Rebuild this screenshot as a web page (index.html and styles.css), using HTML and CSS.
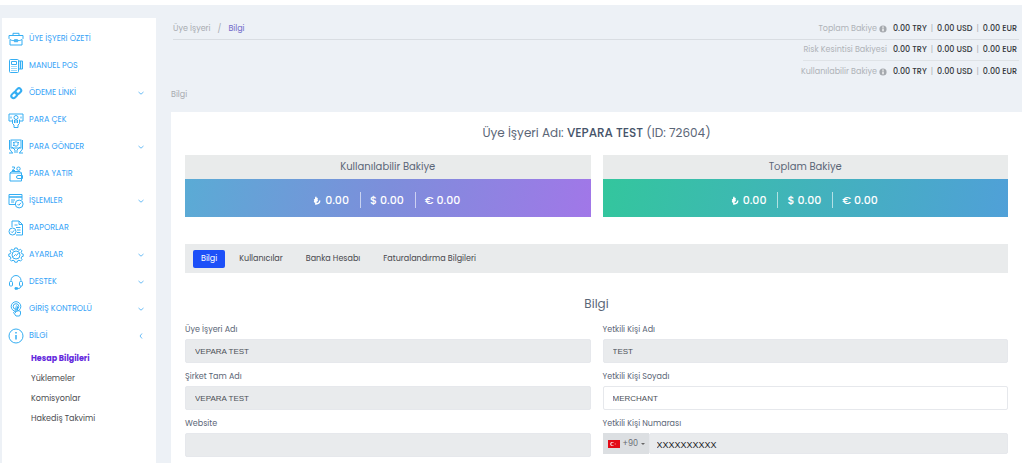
FILE: index.html
```html
<!DOCTYPE html>
<html lang="tr">
<head>
<meta charset="utf-8">
<meta name="viewport" content="width=device-width, initial-scale=1">
<title>Bilgi</title>
<link rel="stylesheet" href="styles.css">
</head>
<body>
<svg class="defs" aria-hidden="true">
  <symbol id="chev" viewBox="0 0 6 6"><path d="M.5 2L3 4.200 5.500 2"/></symbol>
  <symbol id="chev-left" viewBox="0 0 6 6"><path d="M4 .5L2 3l2 2.500"/></symbol>
  <symbol id="info" viewBox="0 0 8 8"><circle cx="4" cy="4" r="3.600" fill="#a5a9ae" stroke="none"/><path d="M4 3.600v2.600M4 1.600v1.100" stroke="#fff" stroke-width="1.300"/></symbol>
  <symbol id="lira" viewBox="0 0 10 12"><path d="M3.500 1v9.500c3 0 5.200-1.600 5.200-4.500M1 5.600l5-2.300M1 8l5-2.300"/></symbol>
</svg>
<div class="page">
  <nav class="sidebar">
    <ul class="menu">
      <li><a class="item" href="#"><svg class="icon" viewBox="0 0 16 16"><path d="M5 4.500V2.300h6v2.200M1 4.500h14v3c-1 1.500-3 2.200-5.500 2.200h-3C4 9.700 2 9 1 7.500zM2 9v5h12V9"/><rect x="6.700" y="8.700" width="2.600" height="2"/></svg>ÜYE İŞYERİ ÖZETİ</a></li>
      <li><a class="item" href="#"><svg class="icon" viewBox="0 0 16 16"><rect x="1.500" y="1.500" width="9" height="13" rx="1"/><path d="M3.500 3.500h5v3h-5zM3.500 8.500h1M5.500 8.500h1M7.500 8.500h1M3.500 10.500h1M5.500 10.500h1M7.500 10.500h1M3.500 12.500h1M5.500 12.500h1M7.500 12.500h1M10.500 3h4v8h-4"/><path stroke-width="1.500" d="M12.500 3v8"/></svg>MANUEL POS</a></li>
      <li><a class="item" href="#"><svg class="icon bold" viewBox="0 0 16 16"><rect x="7" y="4" width="6.500" height="4.400" rx="2.200" transform="rotate(-45 10.250 6.200)"/><rect x="3" y="8" width="6.500" height="4.400" rx="2.200" transform="rotate(-45 6.250 10.200)"/></svg><span>ÖDEME LİNKİ</span><svg class="chev"><use href="#chev"/></svg></a></li>
      <li><a class="item" href="#"><svg class="icon" viewBox="0 0 16 16"><path d="M4.500 9H1V2h14v7h-3.500"/><circle cx="8" cy="5.500" r="2"/><path d="M3 4.500v2M13 4.500v2M4.500 7.500v4l1.500 1.500v2.500h4V13l1.500-1.500v-4M6.500 8v3M8 8v3M9.500 8v3"/></svg>PARA ÇEK</a></li>
      <li><a class="item" href="#"><svg class="icon" viewBox="0 0 16 16"><rect x="3" y="1" width="10" height="8"/><circle cx="8" cy="5" r="2.200"/><path d="M1.500 1v9l3 4M14.500 1v9l-3 4M4 8l3 3v3M12 8l-3 3v3M1 14h4M11 14h4M5 3l1 1M11 3l-1 1M5 7l1-1"/></svg><span>PARA GÖNDER</span><svg class="chev"><use href="#chev"/></svg></a></li>
      <li><a class="item" href="#"><svg class="icon" viewBox="0 0 16 16"><path d="M2 7h11.500v8H2zM2 7l2-1.500h8L13.500 7M14.500 9.500H10a1.500 1.500 0 0 0 0 3h4.500zM4 1h2.500v1.500L4 4.500h3"/><circle cx="10.500" cy="2.700" r="1.700"/></svg>PARA YATIR</a></li>
      <li><a class="item" href="#"><svg class="icon" viewBox="0 0 16 16"><path d="M7.500 11.500H1v-10h13V7"/><path stroke-width="1.500" d="M1 4h13"/><path d="M3 7h4M3 9h3"/><circle cx="11.200" cy="11" r="3.900"/><path d="M9.500 11l1.300 1.300 2.300-2.600"/></svg><span>İŞLEMLER</span><svg class="chev"><use href="#chev"/></svg></a></li>
      <li><a class="item" href="#"><svg class="icon" viewBox="0 0 16 16"><path d="M4 7V1h7l3.500 3.500V15H8M11 1v3.500h3.500M6.500 5h3M8 7.500h4.500M9 10h3.500M9 12.500h3.500"/><circle cx="4.500" cy="11.500" r="3.500"/><path d="M3 11.500l1.200 1.200 2-2.400"/></svg>RAPORLAR</a></li>
      <li><a class="item" href="#"><svg class="icon" viewBox="0 0 16 16"><path d="M6.800 1h2.400l.4 1.600 1.400.6 1.500-.9 1.500 1.500-.9 1.500.6 1.400 1.500.4v2.200l-1.500.4-.6 1.400.9 1.500-1.500 1.500-1.500-.9-1.400.6-.4 1.400H6.800l-.4-1.400-1.400-.6-1.500.9L2 12.600l.9-1.500-.6-1.400-1.500-.4V7.100l1.500-.4.6-1.400L2 3.800l1.500-1.500 1.500.9 1.400-.6z"/><circle cx="8" cy="8" r="4"/><path d="M5.500 9.500l2-2 1 1 2-2.500"/></svg><span>AYARLAR</span><svg class="chev"><use href="#chev"/></svg></a></li>
      <li><a class="item" href="#"><svg class="icon" viewBox="0 0 16 16"><path d="M3 7.500V6.500a5 5 0 0 1 10 0v1M13 12c0 2-1.500 2.500-3.500 2.500"/><rect x="1.500" y="7.500" width="3" height="4.500" rx="1"/><rect x="11.500" y="7.500" width="3" height="4.500" rx="1"/><path class="fill" d="M7 13.700h2.500v1.500H7z"/></svg><span>DESTEK</span><svg class="chev"><use href="#chev"/></svg></a></li>
      <li><a class="item" href="#"><svg class="icon" viewBox="0 0 16 16"><circle cx="8" cy="5.500" r="4.800"/><circle cx="8" cy="5.500" r="2.800"/><path d="M8 11V5.500M8 5a1 1 0 0 1 1.500 1v3.500l3 .8v2.700L11.500 15H8l-2.500-3.500 1-.8L8 12"/></svg><span>GİRİŞ KONTROLÜ</span><svg class="chev"><use href="#chev"/></svg></a></li>
      <li><a class="item" href="#"><svg class="icon" viewBox="0 0 16 16"><circle cx="8" cy="8" r="7"/><path stroke-width="1.500" d="M8 7v4.500M8 4v1.500"/></svg><span>BİLGİ</span><svg class="chev"><use href="#chev-left"/></svg></a>
        <ul class="submenu">
          <li><a class="current" href="#">Hesap Bilgileri</a></li>
          <li><a href="#">Yüklemeler</a></li>
          <li><a href="#">Komisyonlar</a></li>
          <li><a href="#">Hakediş Takvimi</a></li>
        </ul>
      </li>
    </ul>
  </nav>
  <main class="main">
    <header class="top">
      <div class="bar">
        <div class="crumbs"><a href="#">Üye İşyeri</a><span>/</span><a class="active" href="#">Bilgi</a></div>
        <div class="balance"><span>Toplam Bakiye</span><svg class="info"><use href="#info"/></svg><div class="amounts"><b>0.00 TRY</b><i>|</i><b>0.00 USD</b><i>|</i><b>0.00 EUR</b></div></div>
      </div>
      <div class="balance line"><span>Risk Kesintisi Bakiyesi</span><div class="amounts"><b>0.00 TRY</b><i>|</i><b>0.00 USD</b><i>|</i><b>0.00 EUR</b></div></div>
      <div class="balance"><span>Kullanılabilir Bakiye</span><svg class="info"><use href="#info"/></svg><div class="amounts"><b>0.00 TRY</b><i>|</i><b>0.00 USD</b><i>|</i><b>0.00 EUR</b></div></div>
    </header>
    <div class="title">Bilgi</div>
    <section class="card">
      <h1 class="merchant">Üye İşyeri Adı: <b>VEPARA TEST</b> (ID: 72604)</h1>
      <div class="columns">
        <div>
          <h2 class="wallet-title">Kullanılabilir Bakiye</h2>
          <div class="wallet violet"><span><svg class="lira" viewBox="0 0 10 12"><use href="#lira"/></svg>0.00</span><span>$ 0.00</span><span>€ 0.00</span></div>
        </div>
        <div>
          <h2 class="wallet-title">Toplam Bakiye</h2>
          <div class="wallet green"><span><svg class="lira" viewBox="0 0 10 12"><use href="#lira"/></svg>0.00</span><span>$ 0.00</span><span>€ 0.00</span></div>
        </div>
      </div>
      <div class="tabs">
        <button class="tab selected" type="button">Bilgi</button>
        <button class="tab" type="button">Kullanıcılar</button>
        <button class="tab" type="button">Banka Hesabı</button>
        <button class="tab" type="button">Faturalandırma Bilgileri</button>
      </div>
      <h2 class="section-title">Bilgi</h2>
      <form class="columns fields">
        <div class="field"><label for="merchant">Üye İşyeri Adı</label><input id="merchant" value="VEPARA TEST" readonly></div>
        <div class="field"><label for="name">Yetkili Kişi Adı</label><input id="name" value="TEST" readonly></div>
        <div class="field"><label for="company">Şirket Tam Adı</label><input id="company" value="VEPARA TEST" readonly></div>
        <div class="field"><label for="surname">Yetkili Kişi Soyadı</label><input id="surname" value="MERCHANT"></div>
        <div class="field"><label for="site">Website</label><input id="site" readonly></div>
        <div class="field"><label for="phone">Yetkili Kişi Numarası</label>
          <div class="phone">
            <button class="code" type="button"><svg class="flag" viewBox="0 0 12 8"><path fill="#e30a17" d="M0 0h12v8H0z"/><circle cx="4.200" cy="4" r="2" fill="#fff"/><circle cx="4.800" cy="4" r="1.600" fill="#e30a17"/><path fill="#fff" d="M6.500 4l1.400-.5-.3.500.3.500z"/></svg>+90<span class="caret"></span></button>
            <input id="phone" value="XXXXXXXXXX" readonly>
          </div>
        </div>
      </form>
    </section>
  </main>
</div>
</body>
</html>
```
FILE: styles.css
```css
* { box-sizing: border-box; }
body {
  margin: 0;
  padding: 5px 2px 5px 0;
  background: #fff;
  color: #5b6677;
  font-family: Poppins, Inter, "Noto Sans", sans-serif;
  font-size: 8px;
}
ul { list-style: none; margin: 0; padding: 0; }
a { color: inherit; text-decoration: none; }
h1, h2 { margin: 0; font-weight: 400; }
button { border: 0; font-family: inherit; }
.defs { display: none; }

.page {
  display: flex;
  gap: 15px;
  padding-left: 2px;
  background: #edf1f6;
}
.sidebar {
  flex: 0 0 154px;
  margin-top: 13px;
  padding: 7px 0 0 6px;
  background: #fff;
}
.item {
  display: flex;
  align-items: center;
  height: 27px;
  padding-right: 12px;
  color: #36a3f7;
}
.icon {
  width: 16px;
  height: 16px;
  margin-right: 5px;
  fill: none;
  stroke: #35aef3;
  stroke-width: 1;
}
.icon.bold { stroke-width: 2; }
.icon .fill { fill: #35aef3; }
.chev {
  width: 6px;
  height: 6px;
  margin-left: auto;
  fill: none;
  stroke: #6bbcf5;
}
.submenu { padding-left: 23px; color: #4c4c50; line-height: 20px; }
.submenu .current { color: #6329dd; font-weight: 700; }

.main { flex: 1; min-width: 0; }
.top {
  display: flex;
  flex-direction: column;
  align-items: flex-end;
  padding: 13px 3px 0 2px;
}
.bar {
  display: flex;
  justify-content: space-between;
  align-self: stretch;
  border-bottom: 1px solid #d9dde2;
}
.crumbs { display: flex; align-items: center; gap: 7px; color: #a8abb0; }
.crumbs .active { color: #716aca; }
.balance {
  display: flex;
  align-items: center;
  height: 21px;
  padding-right: 2px;
  color: #afb3b8;
}
.balance.line { border-bottom: 1px solid #dfe3e7; }
.info { width: 8px; height: 8px; margin-left: 2px; }
.amounts { display: flex; gap: 4px; margin-left: 6px; }
.amounts b { color: #34373d; font-weight: 500; }
.amounts i { font-style: normal; }
.title { margin-top: 7px; color: #a8abb0; line-height: 12px; }

.card { margin-top: 11px; padding: 10px 14px 6px; background: #fff; }
.merchant { font-size: 12px; line-height: 22px; text-align: center; }
.merchant b { color: #46546a; font-weight: 500; }
.columns { display: grid; grid-template-columns: 1fr 1fr; gap: 12px; }
.merchant + .columns { margin-top: 11px; }
.wallet-title {
  background: #e9ebeb;
  font-size: 10px;
  line-height: 24px;
  text-align: center;
}
.wallet {
  display: flex;
  justify-content: center;
  align-items: center;
  height: 38px;
  padding-top: 4px;
  color: #fff;
  font-size: 11px;
  font-weight: 500;
}
.wallet span { display: flex; align-items: center; height: 16px; padding: 0 11px 0 9px; }
.wallet span + span { border-left: 1px solid rgba(255, 255, 255, .6); }
.violet { background: linear-gradient(100deg, #5aabd5, #7d8edb 50%, #a177e8); }
.green { background: linear-gradient(100deg, #33c69d, #50a0d8); }
.lira { width: 8px; height: 9px; margin-right: 4px; fill: none; stroke: #fff; stroke-width: 2; }

.tabs {
  display: flex;
  align-items: center;
  gap: 5px;
  height: 29px;
  margin-top: 27px;
  padding: 0 8px;
  background: #e9ebec;
}
.tab {
  height: 18px;
  padding: 0 8px;
  border-radius: 2px;
  background: transparent;
  color: #48494e;
  font-size: 8px;
}
.tab + .tab { padding: 0 9px; }
.tab.selected { background: #1d50f8; color: #fff; }
.section-title { margin-top: 20px; font-size: 12px; line-height: 22px; text-align: center; }

.fields { margin-top: 8px; row-gap: 7px; }
.field label { display: block; margin-bottom: 2px; line-height: 14px; }
.field input {
  display: block;
  width: 100%;
  height: 24px;
  padding: 0 9px;
  border: 1px solid #e6e8ec;
  border-radius: 2px;
  background: #fff;
  color: #4c5057;
  font-family: "Liberation Sans", Arial, sans-serif;
  font-size: 8px;
}
.field input:read-only { background: #e9ebed; }
.phone { display: flex; }
.code {
  display: flex;
  flex: none;
  align-items: center;
  gap: 3px;
  width: 46px;
  height: 21px;
  padding: 0 5px;
  background: #dcdfe2;
  color: #666a70;
  font-size: 8px;
}
.flag { flex: none; width: 12px; height: 8px; }
.caret { border: 2px solid transparent; border-top-color: #666; border-bottom: 0; }
.field .phone input { height: 21px; padding: 2px 7px 0; color: #202226; font-size: 9px; }
```
